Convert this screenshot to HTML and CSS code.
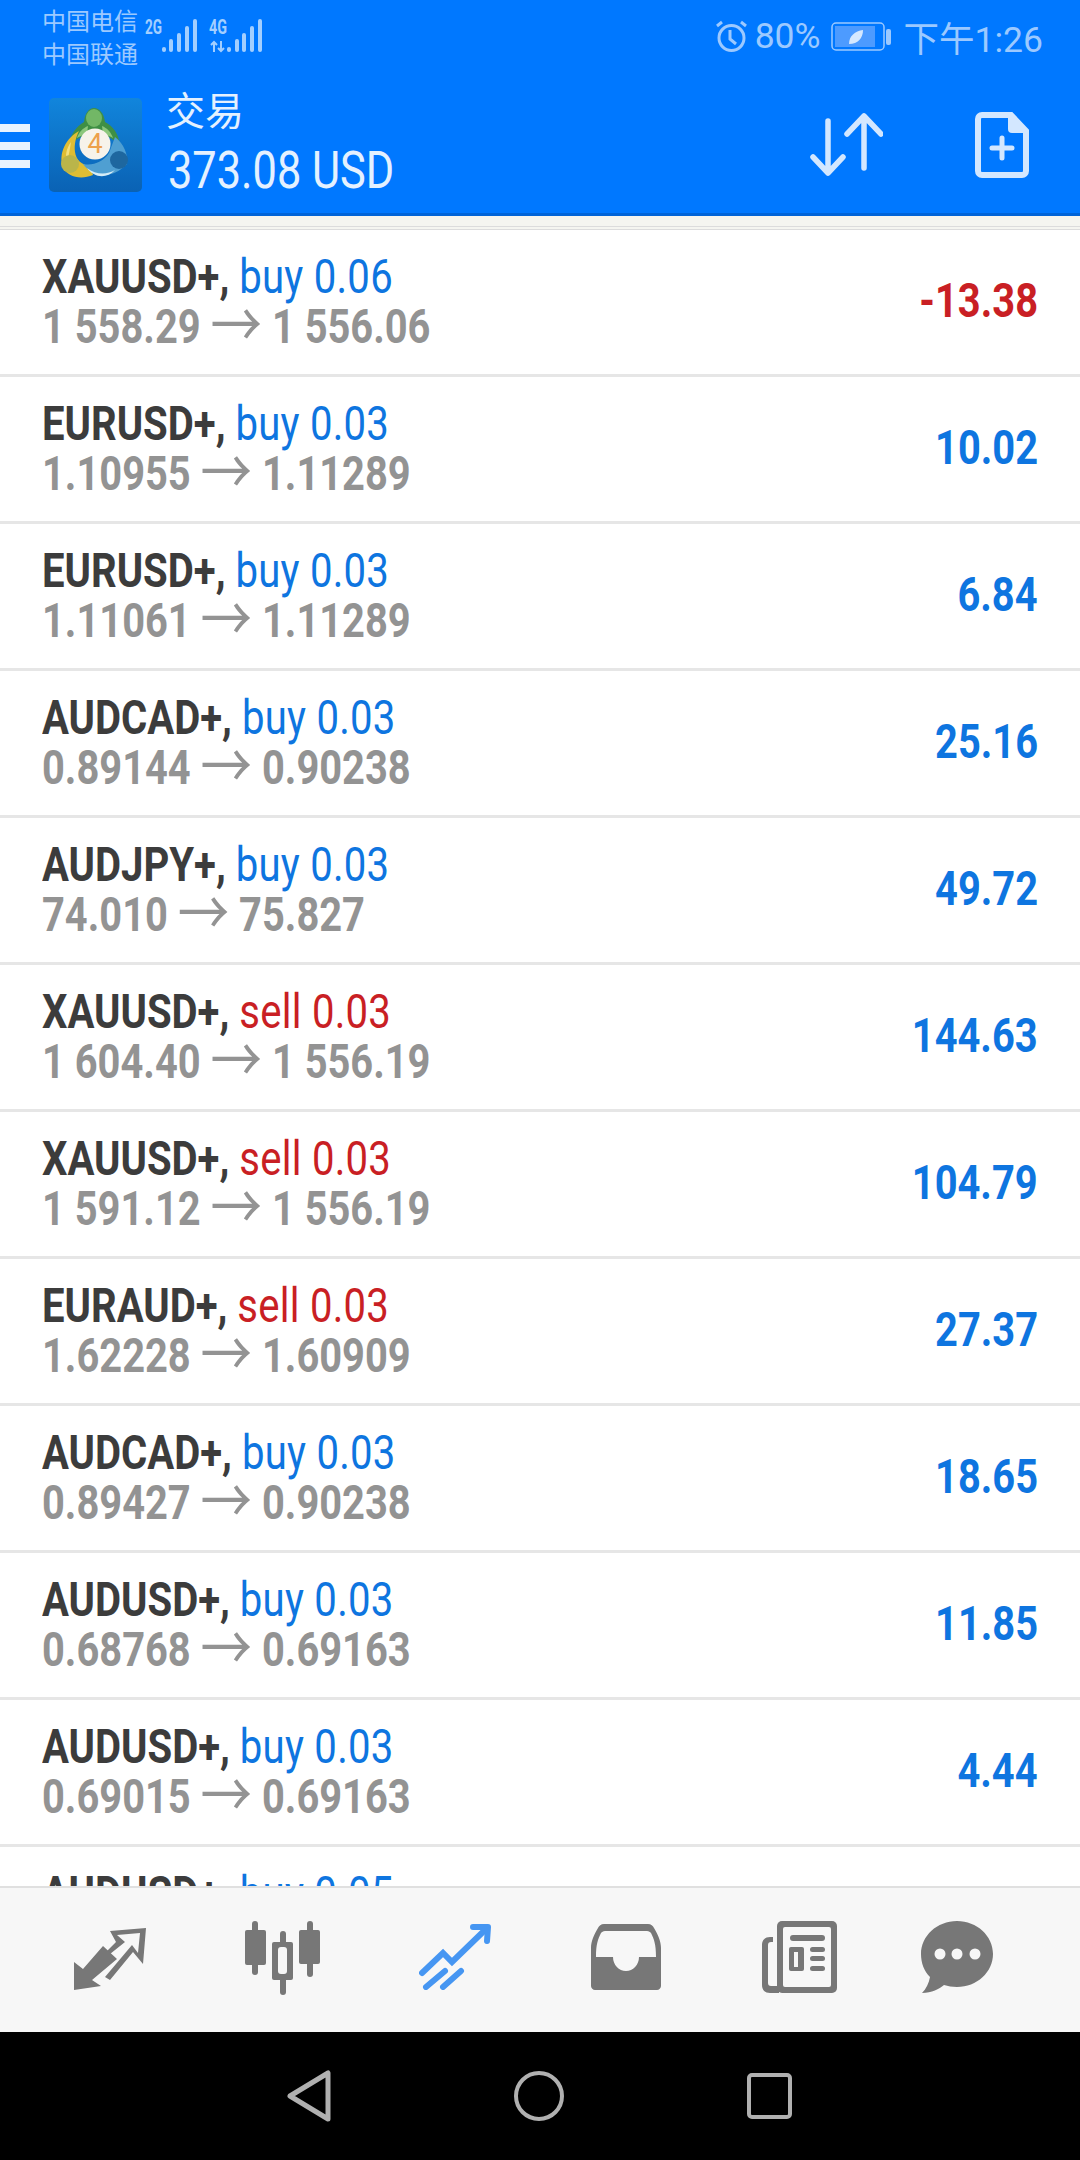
FILE: index.html
```html
<!DOCTYPE html>
<html lang="en">
<head>
    <meta charset="UTF-8">
    <meta name="viewport" content="width=device-width, initial-scale=1.0">
    <title>Trade</title>
    <link rel="stylesheet" href="styles.css">
</head>
<body>
    <div class="phone">
        <header class="header">
            <div class="status">
                <div class="carriers">
                    <span>中国电信</span>
                    <span>中国联通</span>
                </div>
                <svg class="signal" width="120" height="40" viewBox="0 0 120 40">
                    <text class="net" x="0" y="19" textLength="17" lengthAdjust="spacingAndGlyphs">2G</text>
                    <text class="net" x="64" y="19" textLength="18" lengthAdjust="spacingAndGlyphs">4G</text>
                    <path d="M69 37V27M66 30l3-3 3 3M76 26v10M73 33l3 3 3-3" fill="none" stroke="#a3cfff" stroke-width="2"/>
                    <g fill="#a3cfff">
                        <rect x="17" y="32" width="4" height="5" rx="2"/>
                        <rect x="24" y="24" width="4" height="13" rx="2"/>
                        <rect x="32" y="18" width="4" height="19" rx="2"/>
                        <rect x="40" y="11" width="4" height="26" rx="2"/>
                        <rect x="48" y="4" width="4" height="33" rx="2"/>
                        <rect x="82" y="32" width="4" height="5" rx="2"/>
                        <rect x="90" y="24" width="4" height="13" rx="2"/>
                        <rect x="97" y="18" width="4" height="19" rx="2"/>
                        <rect x="105" y="11" width="4" height="26" rx="2"/>
                        <rect x="113" y="4" width="4" height="33" rx="2"/>
                    </g>
                </svg>
                <div class="status-right">
                    <svg class="alarm" width="33" height="33" viewBox="0 0 33 33">
                        <circle cx="16.5" cy="18" r="12.5" fill="none" stroke="#9cc9ff" stroke-width="3"/>
                        <path d="M15 10v9l6 5" fill="none" stroke="#9cc9ff" stroke-width="3"/>
                        <path d="M2 6l5-4M31 6l-5-4" stroke="#9cc9ff" stroke-width="3"/>
                    </svg>
                    <span class="pct">80%</span>
                    <svg class="battery" width="61" height="30" viewBox="0 0 61 30">
                        <rect x="1" y="2" width="52" height="27" rx="4" fill="none" stroke="#9cc9ff" stroke-width="1.5"/>
                        <rect x="4" y="5" width="40" height="21" fill="#4d9bff"/>
                        <path d="M18 23c0-8 6-13 14-14 0 8-5 14-14 14z" fill="#d5e8ff"/>
                        <rect x="55" y="8" width="5" height="16" rx="2" fill="#9cc9ff"/>
                    </svg>
                    <span class="clock">下午1:26</span>
                </div>
            </div>
            <div class="toolbar">
                <div class="menu"><i></i><i></i><i></i></div>
                <svg class="logo" width="93" height="94" viewBox="0 0 93 94">
                    <defs>
                        <linearGradient id="logoBg" x1="0" y1="0" x2="0" y2="1">
                            <stop offset="0" stop-color="#1185dc"/>
                            <stop offset="1" stop-color="#0a62b4"/>
                        </linearGradient>
                    </defs>
                    <rect width="93" height="94" rx="5" fill="url(#logoBg)"/>
                    <path d="M20 48C21 36 28 28 35 24 36 15 40 10 45 10s10 5 11 14c8 4 14 12 15 24-7-8-15-12-25-12s-19 4-26 12z" fill="#3f8f44"/>
                    <ellipse cx="45" cy="20" rx="8" ry="9" fill="#72b766"/>
                    <path d="M28 40c2-6 6-10 11-12l-1 8c-4 1-7 2-10 4zM64 40c-2-6-6-10-11-12l1 8c4 1 7 2 10 4z" fill="#8cc77c"/>
                    <path d="M30 33C17 40 9 56 14 69c4 10 18 13 30 8l-3-9c-8-1-14-6-15-14-1-8 1-15 4-21z" fill="#dfbd33"/>
                    <path d="M22 44c-5 7-6 14-4 20 2-7 3-14 4-20z" fill="#f3df7e"/>
                    <circle cx="21" cy="66" r="9" fill="#bab54a"/>
                    <path d="M34 66c10 14 30 15 44 0 1-10-3-20-12-27l-6 16c-6 9-16 13-26 11z" fill="#4f9fd2"/>
                    <circle cx="70" cy="62" r="9" fill="#1e679f"/>
                    <path d="M38 70c9 7 20 7 28 2-8 9-21 8-28-2z" fill="#d5ecf7"/>
                    <circle cx="46" cy="46" r="15.5" fill="#f7f3ea"/>
                    <text class="logo-num" x="46" y="55" text-anchor="middle">4</text>
                </svg>
                <div class="account">
                    <div class="account-title">交易</div>
                    <div class="account-balance"><span class="cond-wide">373.08 USD</span></div>
                </div>
                <svg class="sort-icon" width="73" height="63" viewBox="0 0 73 63">
                    <g fill="none" stroke="#d3e7ff" stroke-width="5.5" stroke-linecap="round" stroke-linejoin="round">
                        <path d="M18 8v52M3 44l15 16 15-16"/>
                        <path d="M54 3v52M37 21L54 3l17 18"/>
                    </g>
                </svg>
                <svg class="new-icon" width="54" height="66" viewBox="0 0 54 66">
                    <path d="M7 3h29l15 16v40a4 4 0 0 1-4 4H7a4 4 0 0 1-4-4V7a4 4 0 0 1 4-4z" fill="none" stroke="#d3e7ff" stroke-width="6"/>
                    <path d="M33 3l18 18H37a4 4 0 0 1-4-4z" fill="#d3e7ff"/>
                    <path d="M27 26v20M17 36h20" stroke="#d3e7ff" stroke-width="5" stroke-linecap="round"/>
                </svg>
            </div>
        </header>
        <div class="strip"></div>

        <main class="list">
            <div class="row"><div><div class="line1"><b>XAUUSD+,</b> <span class="buy">buy 0.06</span></div><div class="line2">1 558.29 <span class="arrow">→</span> 1 556.06</div></div><div class="profit loss">-13.38</div></div>
            <div class="row"><div><div class="line1"><b>EURUSD+,</b> <span class="buy">buy 0.03</span></div><div class="line2">1.10955 <span class="arrow">→</span> 1.11289</div></div><div class="profit">10.02</div></div>
            <div class="row"><div><div class="line1"><b>EURUSD+,</b> <span class="buy">buy 0.03</span></div><div class="line2">1.11061 <span class="arrow">→</span> 1.11289</div></div><div class="profit">6.84</div></div>
            <div class="row"><div><div class="line1"><b>AUDCAD+,</b> <span class="buy">buy 0.03</span></div><div class="line2">0.89144 <span class="arrow">→</span> 0.90238</div></div><div class="profit">25.16</div></div>
            <div class="row"><div><div class="line1"><b>AUDJPY+,</b> <span class="buy">buy 0.03</span></div><div class="line2">74.010 <span class="arrow">→</span> 75.827</div></div><div class="profit">49.72</div></div>
            <div class="row"><div><div class="line1"><b>XAUUSD+,</b> <span class="sell">sell 0.03</span></div><div class="line2">1 604.40 <span class="arrow">→</span> 1 556.19</div></div><div class="profit">144.63</div></div>
            <div class="row"><div><div class="line1"><b>XAUUSD+,</b> <span class="sell">sell 0.03</span></div><div class="line2">1 591.12 <span class="arrow">→</span> 1 556.19</div></div><div class="profit">104.79</div></div>
            <div class="row"><div><div class="line1"><b>EURAUD+,</b> <span class="sell">sell 0.03</span></div><div class="line2">1.62228 <span class="arrow">→</span> 1.60909</div></div><div class="profit">27.37</div></div>
            <div class="row"><div><div class="line1"><b>AUDCAD+,</b> <span class="buy">buy 0.03</span></div><div class="line2">0.89427 <span class="arrow">→</span> 0.90238</div></div><div class="profit">18.65</div></div>
            <div class="row"><div><div class="line1"><b>AUDUSD+,</b> <span class="buy">buy 0.03</span></div><div class="line2">0.68768 <span class="arrow">→</span> 0.69163</div></div><div class="profit">11.85</div></div>
            <div class="row"><div><div class="line1"><b>AUDUSD+,</b> <span class="buy">buy 0.03</span></div><div class="line2">0.69015 <span class="arrow">→</span> 0.69163</div></div><div class="profit">4.44</div></div>
            <div class="row"><div><div class="line1"><b>AUDUSD+,</b> <span class="buy">buy 0.05</span></div></div></div>
        </main>

        <nav class="tabs">
            <svg class="tab-low" width="72" height="63" viewBox="0 0 72 63" fill="#777">
                <path d="M0 63V35l9 7 20-23 14 13-25 21 9 6z"/>
                <path d="M36 4l36-3-3 36-10-12-23 28-5-3 27-32 6 8 2-20-23 2 8 7-15 12-3-3 9-9z"/>
            </svg>
            <svg width="75" height="74" viewBox="0 0 75 74" fill="#777">
                <rect x="0" y="9" width="21" height="35" rx="2"/>
                <rect x="7" y="0" width="6" height="54" rx="3"/>
                <rect x="54" y="9" width="21" height="34" rx="2"/>
                <rect x="62" y="0" width="6" height="56" rx="3"/>
                <rect x="35" y="10" width="6" height="64" rx="3"/>
                <rect x="27" y="21" width="21" height="38" rx="2"/>
                <rect x="33" y="26" width="9" height="27" rx="3" fill="#f7f7f7"/>
            </svg>
            <svg class="tab-mid" width="72" height="66" viewBox="0 0 72 66" fill="none" stroke="#4696f2" stroke-width="6" stroke-linecap="round">
                <path d="M3 49l21-20 9 9 34-33"/>
                <path d="M54 3h15l-1 14" stroke-linejoin="round"/>
                <path d="M7 63l19-16M24 63l18-16"/>
            </svg>
            <svg class="tab-mid" width="72" height="66" viewBox="0 0 70 66">
                <path d="M13 0h44c3 0 5 2 6 4 4 7 7 13 7 20v38c0 2-2 4-4 4H4c-2 0-4-2-4-4V24c0-7 3-13 7-20 1-2 3-4 6-4z" fill="#777"/>
                <path d="M14 7h42c2 0 3 1 4 2 3 6 5 11 5 24H48c0 8-6 14-13 14s-13-6-13-14H5c0-13 2-18 5-24 1-1 2-2 4-2z" fill="#f7f7f7"/>
            </svg>
            <svg class="tab-news" width="75" height="72" viewBox="0 0 75 72">
                <path d="M8 16h3v5H9c-2 0-3 1-3 3v38c0 2 1 3 3 3h8v7H8c-5 0-8-3-8-8V24c0-5 3-8 8-8z" fill="#777"/>
                <rect x="15" y="0" width="60" height="72" rx="5" fill="#777"/>
                <rect x="21" y="6" width="48" height="60" rx="2" fill="#f7f7f7"/>
                <rect x="28" y="14" width="35" height="6" rx="3" fill="#777"/>
                <rect x="27" y="26" width="15" height="24" rx="2" fill="#777"/>
                <rect x="32" y="31" width="4" height="15" fill="#f7f7f7"/>
                <rect x="48" y="26" width="15" height="5" rx="2.5" fill="#777"/>
                <rect x="48" y="35" width="15" height="5" rx="2.5" fill="#777"/>
                <rect x="48" y="45" width="15" height="5" rx="2.5" fill="#777"/>
            </svg>
            <svg class="tab-last" width="72" height="72" viewBox="0 0 72 72">
                <path d="M36 0c20 0 36 15 36 33S56 66 36 66c-5 0-9-1-13-2-5 4-12 8-22 8 4-4 7-10 8-16C3 50 0 42 0 33 0 15 16 0 36 0z" fill="#777"/>
                <circle cx="19" cy="33" r="5.5" fill="#f7f7f7"/>
                <circle cx="36" cy="33" r="5.5" fill="#f7f7f7"/>
                <circle cx="54" cy="33" r="5.5" fill="#f7f7f7"/>
            </svg>
        </nav>

        <div class="softkeys">
            <svg width="44" height="52" viewBox="0 0 44 52"><path d="M41 3v46L3 26z" fill="none" stroke="#b0b0b0" stroke-width="5" stroke-linejoin="round"/></svg>
            <svg width="50" height="50" viewBox="0 0 50 50"><circle cx="25" cy="25" r="23" fill="none" stroke="#b0b0b0" stroke-width="4"/></svg>
            <svg width="45" height="46" viewBox="0 0 45 46"><rect x="2" y="2" width="41" height="42" rx="3" fill="none" stroke="#b0b0b0" stroke-width="4"/></svg>
        </div>
    </div>
</body>
</html>
```

FILE: styles.css
```css
* {
    box-sizing: border-box;
}

body {
    margin: 0;
    background: #ffffff;
    font-family: Roboto, "Noto Sans CJK SC", sans-serif;
}

.phone {
    width: 1080px;
    height: 2160px;
    display: flex;
    flex-direction: column;
    overflow: hidden;
}

.header {
    height: 216px;
    background: #0078ff;
    border-bottom: 3px solid #0064d8;
    flex-shrink: 0;
}

.status {
    height: 76px;
    display: flex;
    align-items: flex-start;
    padding-left: 42px;
    padding-right: 37px;
    color: #9cc9ff;
}

.carriers {
    display: flex;
    flex-direction: column;
    font-size: 24px;
    line-height: 33px;
    padding-top: 6px;
    width: 96px;
}

.signal {
    margin-top: 15px;
    margin-left: 7px;
}

.net {
    font-size: 21px;
    font-weight: 700;
    fill: #a3cfff;
}

.status-right {
    margin-left: auto;
    display: flex;
    align-items: center;
    height: 72px;
    font-size: 35.5px;
}

.pct {
    margin-left: 7px;
}

.battery {
    margin-left: 10px;
}

.clock {
    margin-left: 12px;
}

.toolbar {
    height: 137px;
    display: flex;
    align-items: center;
    color: #e4f1ff;
}

.menu {
    width: 30px;
    margin-top: 3px;
    display: flex;
    flex-direction: column;
    gap: 10px;
}

.menu i {
    height: 8px;
    background: #e8f3ff;
}

.logo {
    margin-left: 19px;
}

.account {
    margin-left: 26px;
    flex: 1;
}

.account-title {
    font-size: 39px;
    line-height: 46px;
    margin-left: -2px;
}

.account-balance {
    font-size: 51px;
    line-height: 58px;
    margin-top: 7px;
}

.cond-wide {
    display: inline-block;
    transform: scaleX(0.85);
    transform-origin: left center;
    white-space: nowrap;
}

.logo-num {
    font-size: 27px;
    font-weight: 400;
    fill: #eda14c;
}

.sort-icon {
    margin-right: 92px;
}

.new-icon {
    margin-right: 51px;
}

.strip {
    height: 14px;
    background: #f5f5f0;
    border-bottom: 4px double #dcdcdc;
    flex-shrink: 0;
}

.list {
    flex: 1;
    overflow: hidden;
    background: #ffffff;
}

.row {
    height: 147px;
    padding: 21px 42px 0 42px;
    border-bottom: 3px solid #e6e6e6;
    display: flex;
    justify-content: space-between;
}

.line1,
.line2 {
    font-size: 48px;
    transform-origin: left center;
    white-space: nowrap;
}

.line1 {
    line-height: 51px;
    transform: scaleX(0.835);
}

.line1 b {
    color: #3c3c3c;
    font-weight: 700;
}

.line2 {
    line-height: 50px;
    font-weight: 700;
    color: #939393;
    transform: scaleX(0.83);
}

.arrow {
    font-size: 62px;
    font-weight: 400;
    line-height: 0;
    vertical-align: -5px;
}

.buy,
.sell {
    letter-spacing: 0.3px;
}

.buy {
    color: #0e75e0;
}

.sell {
    color: #c91f24;
}

.profit {
    font-size: 48px;
    font-weight: 700;
    line-height: 100px;
    color: #0e75e0;
    transform: scaleX(0.83);
    transform-origin: right center;
}

.loss {
    color: #c91f24;
}

.tabs {
    height: 146px;
    background: #f7f7f7;
    border-top: 2px solid #e0e0e0;
    padding: 33px 0 0 74px;
    display: flex;
    gap: 99px;
    align-items: flex-start;
    flex-shrink: 0;
}

.tab-low {
    margin-top: 6px;
}

.tab-mid {
    margin-top: 3px;
}

.tab-news {
    margin-left: 1px;
}

.tab-last {
    margin-left: -15px;
}

.softkeys {
    height: 128px;
    background: #000000;
    flex-shrink: 0;
    display: flex;
    align-items: center;
    gap: 183px;
    padding-left: 287px;
}
```
